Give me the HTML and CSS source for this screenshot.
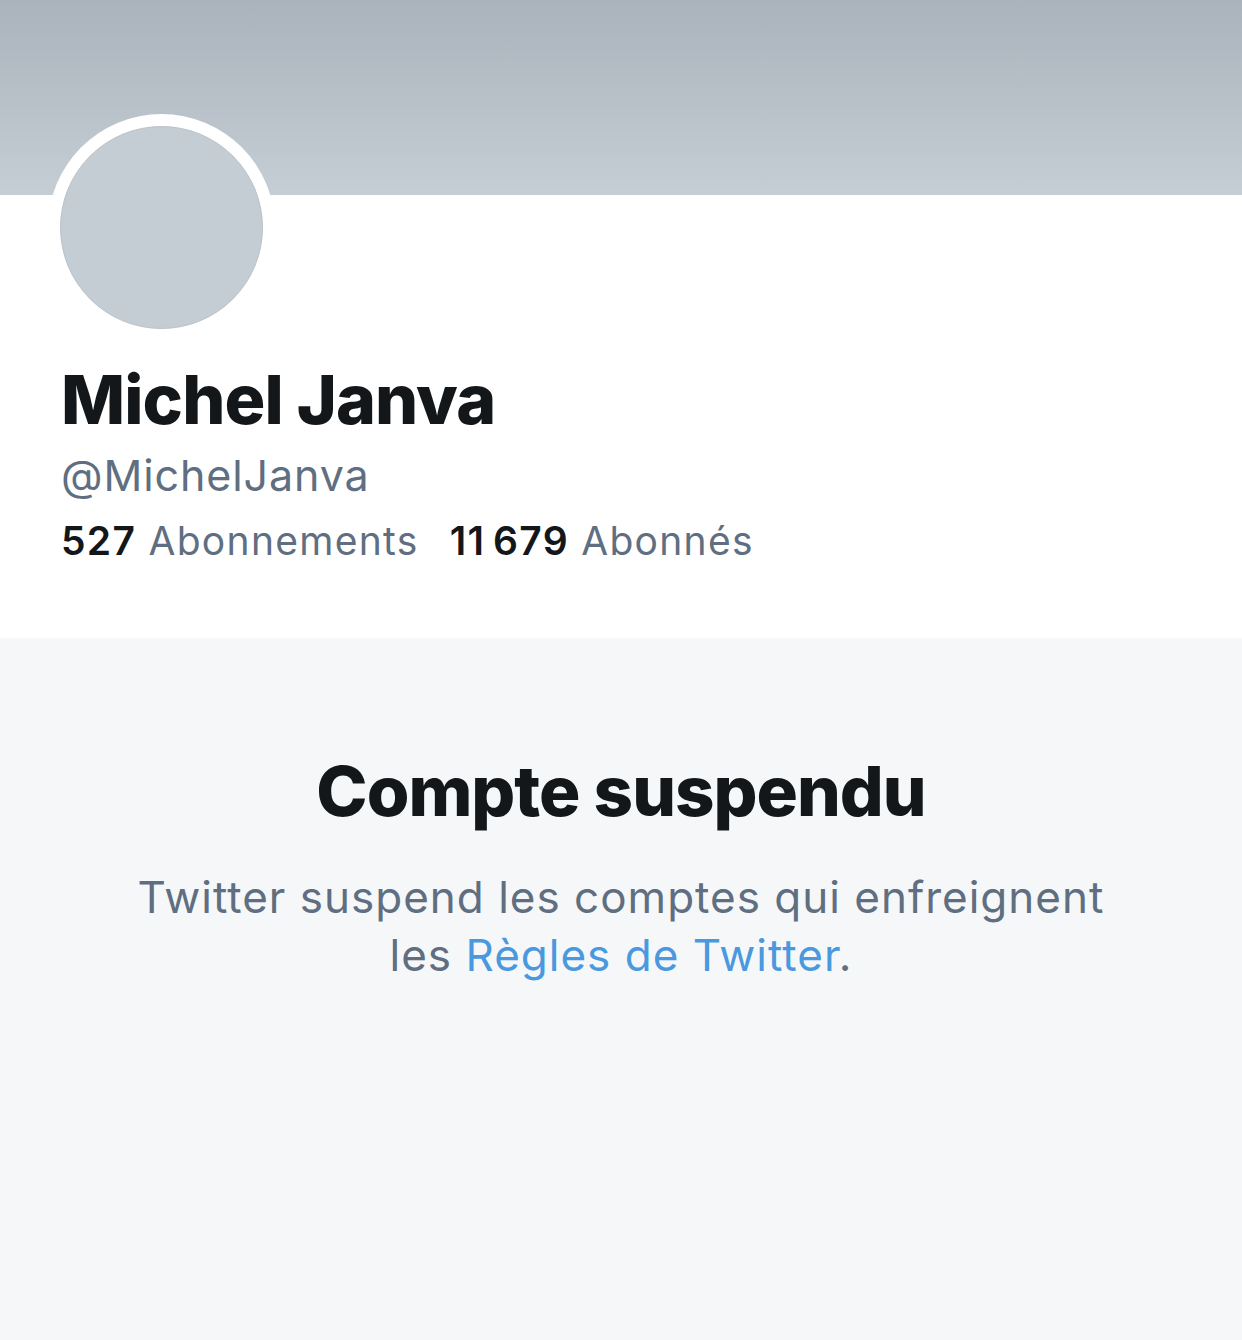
FILE: index.html
```html
<!DOCTYPE html>
<html lang="fr">
<head>
<meta charset="utf-8">
<link rel="stylesheet" href="styles.css">
</head>
<body>
<div class="page">
  <header class="profile">
    <div class="banner"></div>
    <div class="info">
      <div class="avatar-ring"><div class="avatar"></div></div>
      <h1 class="name">Michel Janva</h1>
      <div class="handle">@MichelJanva</div>
      <div class="stats">
        <span class="stat"><b>527</b> Abonnements</span>
        <span class="stat"><b>11&#8201;679</b> Abonnés</span>
      </div>
    </div>
  </header>
  <section class="suspended">
    <h2 class="title">Compte suspendu</h2>
    <p class="msg">Twitter suspend les comptes qui enfreignent<br>les <a class="link">Règles de Twitter</a>.</p>
  </section>
</div>
</body>
</html>
```
FILE: styles.css
```css
* { box-sizing: border-box; }
html, body { margin: 0; padding: 0; }
body {
  font-family: Inter, "Liberation Sans", sans-serif;
  background: #f5f7f9;
  width: 1242px;
  height: 1340px;
  overflow: hidden;
}
.page { display: flex; flex-direction: column; height: 1340px; }
.profile { background: #fff; }
.banner {
  height: 195px;
  background: linear-gradient(to bottom, #aab3bb, #c5ced5);
}
.info {
  padding: 0 62px 0 61px;
  height: 443px;
  position: relative;
}
.avatar-ring {
  position: absolute;
  left: 48px;
  top: -81px;
  width: 227px;
  height: 227px;
  border-radius: 50%;
  background: #fff;
  display: flex;
  align-items: center;
  justify-content: center;
}
.avatar {
  width: 203px;
  height: 203px;
  border-radius: 50%;
  background: #c4cdd4;
  border: 1px solid #b9c2ca;
}
.name {
  margin: 0;
  padding-top: 160px;
  font-size: 68px;
  font-weight: 800;
  color: #14171a;
  letter-spacing: -0.9px;
  line-height: 88px;
}
.handle {
  margin-top: 4px;
  font-size: 43px;
  letter-spacing: 0.9px;
  color: #5f6e80;
  line-height: 56px;
}
.stats {
  display: flex;
  gap: 31px;
  font-size: 39px;
  letter-spacing: 1.3px;
  line-height: 56px;
  color: #5f6e80;
  margin-top: 10px;
}
.stat b { color: #14171a; font-weight: 600; }
.suspended {
  flex: 1;
  text-align: center;
  padding-top: 108px;
}
.title {
  margin: 0;
  font-size: 69px;
  font-weight: 800;
  color: #14171a;
  line-height: 90px;
  letter-spacing: -1px;
}
.msg {
  margin: 32px 0 0;
  font-size: 44px;
  letter-spacing: 1px;
  line-height: 58px;
  color: #5f6e80;
}
.link { color: #4a99de; }
```
